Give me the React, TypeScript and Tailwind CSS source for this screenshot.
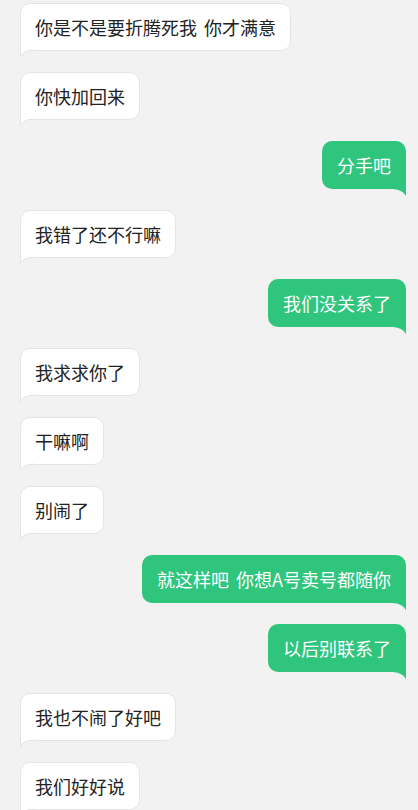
const MESSAGES: { side: "left" | "right"; text: string }[] = [
  { side: "left", text: "你是不是要折腾死我 你才满意" },
  { side: "left", text: "你快加回来" },
  { side: "right", text: "分手吧" },
  { side: "left", text: "我错了还不行嘛" },
  { side: "right", text: "我们没关系了" },
  { side: "left", text: "我求求你了" },
  { side: "left", text: "干嘛啊" },
  { side: "left", text: "别闹了" },
  { side: "right", text: "就这样吧 你想A号卖号都随你" },
  { side: "right", text: "以后别联系了" },
  { side: "left", text: "我也不闹了好吧" },
  { side: "left", text: "我们好好说" },
];

function Bubble({ side, text }: { side: "left" | "right"; text: string }) {
  if (side === "left") {
    return (
      <div className="flex justify-start pl-[20px]">
        <div className="relative rounded-[10px] rounded-bl-none border border-[#e4e4e4] bg-white px-[14px] py-[11px] text-[18px] leading-[24px] text-[#222] [word-spacing:3px]">
          {text}
          <svg
            className="absolute left-[-1px] top-full mt-[-1px]"
            width="14"
            height="8"
            viewBox="0 0 14 8"
          >
            <path d="M0.5 0 L0.5 7.5 Q3 1.5 14 1 L14 0 Z" fill="#ffffff" />
            <path d="M0.5 0 L0.5 7.5 Q3 1.5 14 1" fill="none" stroke="#e4e4e4" strokeWidth="1" />
          </svg>
        </div>
      </div>
    );
  }
  return (
    <div className="flex justify-end pr-[12px]">
      <div className="relative rounded-[10px] rounded-br-none bg-[#2fc57d] px-[15px] py-[12px] text-[18px] leading-[24px] text-white [word-spacing:3px]">
        {text}
        <svg
          className="absolute right-0 top-full"
          width="13"
          height="7"
          viewBox="0 0 13 7"
        >
          <path d="M13 0 L13 7 Q10 1 0 0 Z" fill="#2fc57d" />
        </svg>
      </div>
    </div>
  );
}

export default function App() {
  return (
    <div
      className="min-h-[810px] w-full bg-[#f2f2f2] pt-[3px]"
      style={{ fontFamily: '"Noto Sans CJK SC", "Noto Sans", sans-serif' }}
    >
      <div className="flex flex-col gap-[21px]">
        {MESSAGES.map((m, i) => (
          <Bubble key={i} side={m.side} text={m.text} />
        ))}
      </div>
    </div>
  );
}
